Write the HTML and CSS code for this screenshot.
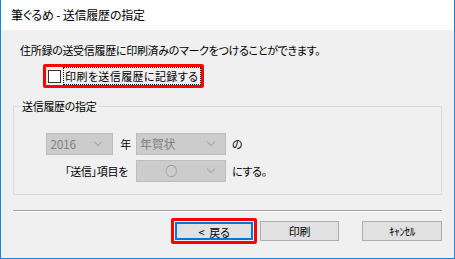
FILE: index.html
```html
<!DOCTYPE html>
<html lang="ja">
<head>
<meta charset="utf-8">
<link rel="stylesheet" href="styles.css">
</head>
<body>
<div class="window">
  <div class="titlebar">筆ぐるめ - 送信履歴の指定</div>
  <div class="content">
    <div class="intro">住所録の送受信履歴に印刷済みのマークをつけることができます。</div>
    <div class="check-row">
      <div class="highlight">
        <span class="checkbox"></span>
        <span class="check-label">印刷を送信履歴に記録する</span>
      </div>
    </div>
    <fieldset class="group">
      <legend>送信履歴の指定</legend>
      <div class="grid">
        <div class="cell-right">
          <div class="combo combo-year"><span class="combo-text">2016</span><span class="chev"></span></div>
          <span class="unit">年</span>
        </div>
        <div class="combo combo-wide"><span class="combo-text">年賀状</span><span class="chev"></span></div>
        <span class="after">の</span>
        <div class="cell-right"><span class="label">「送信」項目を</span></div>
        <div class="combo combo-wide"><span class="combo-text center">○</span><span class="chev"></span></div>
        <span class="after">にする。</span>
      </div>
    </fieldset>
    <div class="separator"></div>
    <div class="buttons">
      <div class="btn-highlight"><button class="btn btn-default">&lt;<span class="gap">戻る</span></button></div>
      <button class="btn btn-print">印刷</button>
      <button class="btn btn-cancel">ｷｬﾝｾﾙ</button>
    </div>
  </div>
</div>
</body>
</html>
```
FILE: styles.css
```css
* { box-sizing: border-box; }
html, body { margin: 0; padding: 0; background: #fff; }
body {
  font-family: "Noto Sans CJK JP", "Noto Sans", sans-serif;
  font-size: 11px;
  letter-spacing: -0.3px;
  font-feature-settings: "palt";
  color: #000;
}
.window {
  width: 455px;
  height: 259px;
  border: 1px solid #1883d7;
  border-top: 0;
  display: flex;
  flex-direction: column;
  background: #f0f0f0;
}
.titlebar {
  height: 30px;
  line-height: 30px;
  background: #fff;
  padding-left: 10px;
  font-size: 12px;
  letter-spacing: -0.2px;
}
.content {
  flex: 1;
  padding: 0 12px 0 12px;
  display: flex;
  flex-direction: column;
}
.intro {
  margin-top: 12px;
  margin-left: 7px;
  height: 16px;
  line-height: 16px;
}
.check-row {
  margin-top: 6px;
  margin-left: 30px;
  display: flex;
}
.highlight {
  border: 3px solid #ff0000;
  border-radius: 2px;
  height: 24px;
  display: flex;
  align-items: center;
  padding-left: 2px;
  padding-right: 0;
}
.checkbox {
  width: 13px;
  height: 13px;
  border: 1px solid #333;
  background: #fff;
  flex: none;
}
.check-label {
  margin-left: 2px;
  height: 18px;
  line-height: 16px;
  border: 1px dotted #000;
  padding: 0 2px 0 1px;
  letter-spacing: 0.4px;
  white-space: nowrap;
}
.group {
  margin: 10px 0 0 0;
  padding: 0 0 12px 0;
  border: 1px solid #dcdcdc;
  min-width: 0;
}
.group legend {
  margin-left: 7px;
  padding: 0 1px;
  line-height: 16px;
  height: 16px;
}
.grid {
  margin-top: 19px;
  display: grid;
  grid-template-columns: 91px 90px auto;
  grid-auto-rows: 22px;
  row-gap: 5px;
  align-items: center;
  padding-left: 31px;
}
.cell-right {
  display: flex;
  align-items: center;
  justify-content: flex-end;
  padding-right: 5px;
  height: 22px;
}
.unit { margin-left: 7px; line-height: 16px; }
.label { line-height: 16px; padding-right: 3px; }
.after { margin-left: 6px; line-height: 16px; }
.combo {
  height: 22px;
  background: #cccccc;
  border: 1px solid #bdbdbd;
  display: flex;
  align-items: center;
  color: #7f7f7f;
}
.combo-year { width: 67px; }
.combo-wide { width: 90px; }
.combo-text {
  flex: 1;
  padding-left: 3px;
  line-height: 16px;
  font-size: 12px;
}
.combo-text.center { text-align: center; padding-left: 0; padding-right: 0; }
.chev {
  width: 14px;
  height: 14px;
  margin-right: 6px;
  flex: none;
  position: relative;
}
.chev::before {
  content: "";
  position: absolute;
  left: 3px;
  top: 2px;
  width: 5px;
  height: 5px;
  border-right: 1px solid #a6a6a6;
  border-bottom: 1px solid #a6a6a6;
  transform: rotate(45deg);
}
.separator {
  margin-top: 15px;
  height: 2px;
  border-top: 1px solid #a0a0a0;
  border-bottom: 1px solid #ffffff;
}
.buttons {
  margin-top: 6px;
  display: flex;
  justify-content: flex-end;
  align-items: center;
}
.btn-highlight {
  border: 3px solid #ff0000;
  border-radius: 2px;
  padding: 1px;
  display: flex;
}
.btn {
  font-family: inherit;
  font-size: 11px;
  letter-spacing: -0.3px;
  font-feature-settings: "palt";
  height: 20px;
  background: #e1e1e1;
  border: 1px solid #adadad;
  padding: 0;
  line-height: 16px;
  color: #000;
}
.gap { margin-left: 5px; }
.btn-default {
  width: 78px;
  height: 18px;
  border: 2px solid #0078d7;
}
.btn-print { width: 79px; margin-left: 3px; }
.btn-cancel { width: 80px; margin-left: 23px; }
```
